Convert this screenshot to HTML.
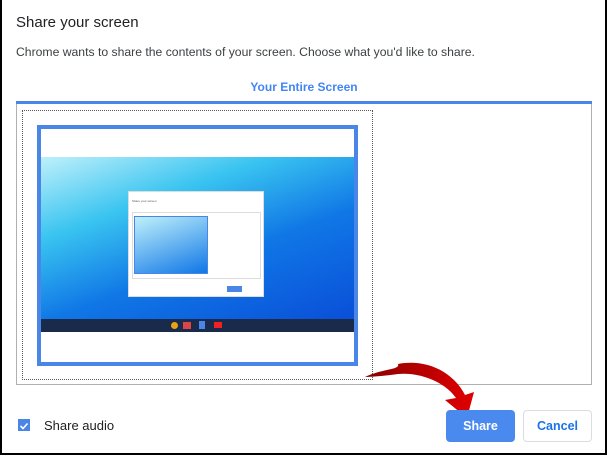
<!DOCTYPE html>
<html><head><style>
body{margin:0;width:607px;height:455px;background:#fff;font-family:"Liberation Sans",Arial,sans-serif;position:relative;overflow:hidden}
.frame{position:absolute;left:0;top:0;border-left:2px solid #000;border-right:2px solid #000;border-bottom:2px solid #000;box-sizing:border-box;width:607px;height:455px}
.a{position:absolute}
</style></head><body>
<div class="frame"></div>
<div class="a" style="left:16px;top:14px;font-size:15px;color:#202124">Share your screen</div>
<div class="a" style="left:16px;top:45px;font-size:12.2px;color:#3c4043">Chrome wants to share the contents of your screen. Choose what you'd like to share.</div>
<div class="a" style="left:16px;top:80px;width:576px;text-align:center;font-size:12px;font-weight:bold;color:#4285f4">Your Entire Screen</div>
<div class="a" style="left:16px;top:101px;width:576px;height:3px;background:#4a86e8"></div>
<div class="a" style="left:16px;top:104px;width:576px;height:281px;border:1px solid #b0b0b0;border-top:none;box-sizing:border-box"></div>
<div class="a" style="left:22px;top:110px;width:351px;height:270px;border:1px dotted #555;box-sizing:border-box"></div>
<div class="a" style="left:37px;top:125px;width:321px;height:241px;border:4px solid #4a86e8;box-sizing:border-box;background:#fff;overflow:hidden">
 <div class="a" style="left:0;top:28px;width:313px;height:162px;background:linear-gradient(160deg,#bff0fb 0%,#39c4f0 30%,#1077e6 60%,#0a4fd8 100%)"></div>
 <div class="a" style="left:0;top:190px;width:313px;height:13px;background:#1a2a4a"></div>
 <div class="a" style="left:87px;top:62px;width:134px;height:104px;background:#fff;border:1px solid #ddd">
  <div class="a" style="left:3px;top:7px;width:80px;font-size:3px;color:#555">Share your screen</div>
  <div class="a" style="left:3px;top:20px;width:127px;height:65px;border:1px solid #ddd"></div>
  <div class="a" style="left:5px;top:24px;width:72px;height:56px;border:1px solid #4a86e8;background:linear-gradient(160deg,#bff0fb,#1077e6)"></div>
  <div class="a" style="left:98px;top:94px;width:15px;height:6px;background:#4a86e8"></div>
 </div>
 <div class="a" style="left:130px;top:193px;width:7px;height:7px;border-radius:50%;background:#e8a317"></div>
 <div class="a" style="left:142px;top:193px;width:8px;height:7px;background:#d44"></div>
 <div class="a" style="left:158px;top:192px;width:6px;height:8px;background:#4a86e8"></div>
 <div class="a" style="left:173px;top:193px;width:8px;height:6px;background:#e22"></div>
</div>
<svg class="a" style="left:360px;top:350px" width="120" height="70" viewBox="0 0 120 70">
 <defs><linearGradient id="g" x1="0" x2="1"><stop offset="0" stop-color="#8a0000"/><stop offset="1" stop-color="#e00000"/></linearGradient></defs>
 <path d="M5 27 C25 18 40 20 38 14 C70 8 95 25 105 45 L114 42 L107 68 L85 50 L96 48 C85 32 60 22 38 24 C30 25 15 27 5 27Z" fill="url(#g)"/>
</svg>
<div class="a" style="left:18px;top:419px;width:12px;height:12px;background:#4a86e8"><svg width="12" height="12"><path d="M2.5 6 L5 8.5 L9.5 3.5" stroke="#fff" stroke-width="1.6" fill="none"/></svg></div>
<div class="a" style="left:44px;top:418px;font-size:13px;color:#202124">Share audio</div>
<div class="a" style="left:446px;top:410px;width:69px;height:32px;background:#4a89ee;border-radius:4px;color:#fff;font-size:12.5px;font-weight:bold;text-align:center;line-height:32px">Share</div>
<div class="a" style="left:523px;top:410px;width:69px;height:32px;border:1px solid #dadce0;box-sizing:border-box;border-radius:4px;color:#1a73e8;font-size:12.5px;font-weight:bold;text-align:center;line-height:30px">Cancel</div>
</body></html>
